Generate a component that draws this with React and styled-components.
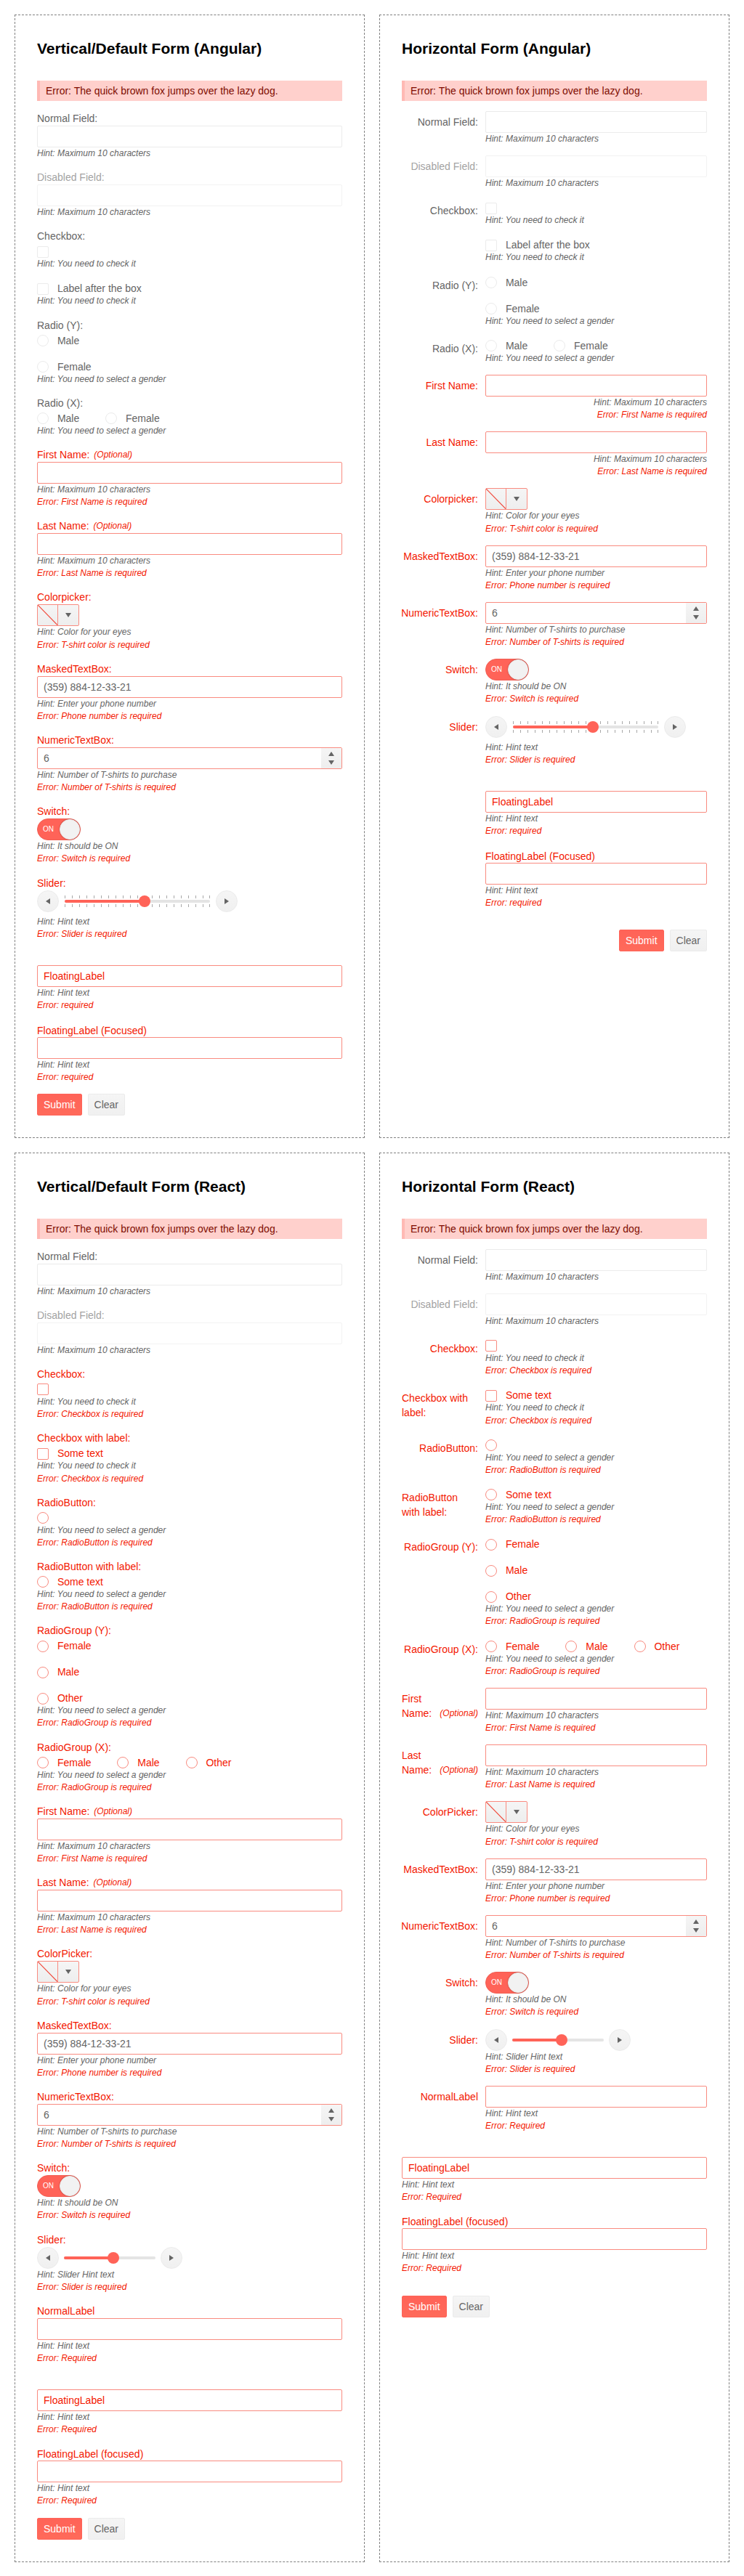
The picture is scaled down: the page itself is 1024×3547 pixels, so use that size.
import React from "react";
import styled, { createGlobalStyle, css } from "styled-components";

const color = {
  text: "#656565",
  error: "#f31700",
  errorBorder: "#f98b80",
  border: "#ebebeb",
  primary: "#ff6358",
};

const GlobalStyle = createGlobalStyle`
  *, *::before, *::after { box-sizing: border-box; }
  body {
    margin: 0;
    background: #fff;
    color: ${color.text};
    font-family: "Liberation Sans", Arial, sans-serif;
    font-size: 14px;
    line-height: 20px;
  }
`;

const Page = styled.main`
  display: grid;
  grid-template-columns: repeat(2, 482px);
  gap: 20px;
  padding: 20px;
`;

const Card = styled.section`
  border: 1px dashed #808080;
  padding: 30px;
`;

const Title = styled.h2`
  margin: 0 0 28.9px;
  color: #000;
  font-size: 21px;
  font-weight: 700;
  line-height: 31.1px;
`;

const Message = styled.div`
  border-left: 4px solid #ffb9b4;
  padding: 4px 8px;
  background: #ffd0cc;
  color: #7e0c00;
`;

const FieldRow = styled.div`
  display: flex;
  flex-direction: ${(p) => (p.$horizontal ? "row" : "column")};
  align-items: ${(p) => (p.$horizontal ? "flex-start" : "stretch")};
  gap: ${(p) => (p.$horizontal ? "10px" : "0")};
  margin-top: 14px;
  color: ${(p) => (p.$error ? color.error : color.text)};
`;

const Label = styled.label`
  display: flex;
  align-items: flex-end;
  opacity: ${(p) => (p.$disabled ? 0.6 : 1)};
  ${(p) =>
    p.$horizontal &&
    css`
      flex: none;
      justify-content: flex-end;
      width: 105px;
      padding-top: 5px;
    `}
`;

const Optional = styled.span`
  margin-left: 6px;
  font-size: 12px;
  font-style: italic;
`;

const Content = styled.div`
  flex: 1;
  min-width: 0;
`;

const TextBox = styled.div`
  display: flex;
  justify-content: space-between;
  height: 30px;
  border: 1px solid ${(p) => (p.$error ? color.errorBorder : color.border)};
  border-radius: 2px;
  background: #fff;
  opacity: ${(p) => (p.$disabled ? 0.6 : 1)};
`;

const Value = styled.span`
  padding: 4px 8px;
  color: ${(p) => (p.$error ? color.error : color.text)};
`;

const FloatingCaption = styled.div`
  height: 20px;
  padding-top: 1px;
`;

const Note = styled.div`
  font-size: 12px;
  font-style: italic;
  line-height: 17.143px;
  text-align: ${(p) => (p.$end ? "right" : "left")};
  color: ${(p) => (p.$error ? color.error : color.text)};
`;

const Options = styled.div`
  display: flex;
  flex-direction: ${(p) => (p.$inline ? "row" : "column")};
  gap: ${(p) => (p.$inline ? "35.89px" : "16px")};
`;

const Option = styled.div`
  display: flex;
  align-items: flex-start;
  gap: 11.89px;
  height: 20px;
`;

const Tick = styled.span`
  width: 16px;
  height: 16px;
  margin-top: 3.25px;
  border: 1px solid ${(p) => (p.$error ? color.errorBorder : color.border)};
  border-radius: ${(p) => (p.$round ? "50%" : "2px")};
  background: #fff;
`;

const OptionText = styled.span`
  padding-top: 1px;
`;

const Picker = styled.div`
  display: flex;
  width: 58px;
  height: 30px;
  border: 1px solid ${color.errorBorder};
  border-radius: 2px;
  background: linear-gradient(#f5f5f5, #eeeeee);
  color: ${color.text};
`;

const Swatch = styled.div`
  width: 28px;
  border-right: 1px solid ${color.errorBorder};
  svg { display: block; }
`;

const PickerButton = styled.div`
  display: flex;
  flex: 1;
  align-items: center;
  justify-content: center;
`;

const Spinner = styled.div`
  display: flex;
  flex-direction: column;
  align-items: center;
  justify-content: center;
  gap: 6px;
  width: 28px;
  background: linear-gradient(#f5f5f5, #eeeeee);
  color: ${color.text};
`;

const SwitchTrack = styled.div`
  display: flex;
  align-items: center;
  justify-content: space-between;
  width: 60px;
  height: 30px;
  border: 1px solid #f15e53;
  border-radius: 15px;
  padding-left: 7px;
  background: ${color.primary};
  color: #fff;
  font-size: 10px;
  line-height: 14px;
`;

const SwitchThumb = styled.span`
  width: 28px;
  height: 28px;
  border: 1px solid #ebebeb;
  border-radius: 50%;
  background: #f2f2f2;
  box-shadow: 0 0 2px rgba(0, 0, 0, 0.3);
`;

const SliderBox = styled.div`
  display: flex;
  align-items: center;
  gap: ${(p) => (p.$ticks ? "8px" : "7px")};
  height: 30px;
  margin-bottom: ${(p) => (p.$ticks ? "5.5px" : "0")};
  color: ${color.text};
`;

const RoundButton = styled.span`
  display: flex;
  align-items: center;
  justify-content: center;
  width: 30px;
  height: 30px;
  border: 1px solid ${color.border};
  border-radius: 50%;
  background: linear-gradient(#f5f5f5, #f0f0f0);
`;

const Actions = styled.div`
  display: flex;
  gap: 8px;
  justify-content: ${(p) => (p.$end ? "flex-end" : "flex-start")};
  margin-top: ${(p) => (p.$horizontal ? "28px" : "14px")};
`;

const Button = styled.button`
  height: 30px;
  margin: 0;
  padding: 4px 8px;
  border: 1px solid ${(p) => (p.$primary ? color.primary : color.border)};
  border-radius: 2px;
  background: ${(p) =>
    p.$primary ? "linear-gradient(#ff6358, #ff6a5a)" : "linear-gradient(#f5f5f5, #f0f0f0)"};
  color: ${(p) => (p.$primary ? "#fff" : color.text)};
  font: inherit;
`;

const ARROWS = {
  up: [8, 6, "0,6 4,0 8,6"],
  down: [8, 6, "0,0 8,0 4,6"],
  left: [6, 8, "6,0 0,4 6,8"],
  right: [6, 8, "0,0 6,4 0,8"],
};

function Arrow({ dir }) {
  const [w, h, points] = ARROWS[dir];
  return (
    <svg width={w} height={h} viewBox={`0 0 ${w} ${h}`} fill="currentColor">
      <polygon points={points} />
    </svg>
  );
}

function Slider({ ticks }) {
  const width = ticks ? 200 : 126;
  const value = ticks ? 110 : 68;
  const marks = ticks ? Array.from({ length: 21 }, (_, i) => Math.min(i * 10, 199)) : [];
  return (
    <SliderBox $ticks={ticks}>
      <RoundButton><Arrow dir="left" /></RoundButton>
      <svg width={width} height="16">
        {marks.map((x) => (
          <g key={x} fill="#a8a8a8">
            <rect x={x} y="0" width="1" height="4" />
            <rect x={x} y="12" width="1" height="4" />
          </g>
        ))}
        <rect y="6" width={width} height="4" rx="2" fill="#e4e4e4" />
        <rect y="6" width={value} height="4" rx="2" fill={color.primary} />
        <circle cx={value} cy="8" r="8" fill={color.primary} />
      </svg>
      <RoundButton><Arrow dir="right" /></RoundButton>
    </SliderBox>
  );
}

function Control({ type, value, options, inline, error, disabled }) {
  switch (type) {
    case "check":
    case "radio":
      return (
        <Options $inline={inline}>
          {(options || [""]).map((text) => (
            <Option key={text}>
              <Tick $round={type === "radio"} $error={error} />
              {text && <OptionText>{text}</OptionText>}
            </Option>
          ))}
        </Options>
      );
    case "color":
      return (
        <Picker>
          <Swatch>
            <svg width="27" height="28">
              <path d="M0 0L27 27.5" stroke="#f1493b" strokeWidth="1.2" />
            </svg>
          </Swatch>
          <PickerButton><Arrow dir="down" /></PickerButton>
        </Picker>
      );
    case "number":
      return (
        <TextBox $error={error}>
          <Value>{value}</Value>
          <Spinner><Arrow dir="up" /><Arrow dir="down" /></Spinner>
        </TextBox>
      );
    case "switch":
      return <SwitchTrack>ON<SwitchThumb /></SwitchTrack>;
    case "slider":
    case "tickSlider":
      return <Slider ticks={type === "tickSlider"} />;
    case "floating":
      return (
        <>
          <FloatingCaption />
          <TextBox $error={error}><Value $error>{value}</Value></TextBox>
        </>
      );
    case "floatingFocused":
      return (
        <>
          <FloatingCaption>{value}</FloatingCaption>
          <TextBox $error={error} />
        </>
      );
    default:
      return (
        <TextBox $error={error} $disabled={disabled}>
          {value && <Value>{value}</Value>}
        </TextBox>
      );
  }
}

function Field({ horizontal, wide, label, optional, hint, error, noteEnd, ...control }) {
  const side = horizontal && !wide;
  return (
    <FieldRow $horizontal={side} $error={!!error}>
      {(label || side) && (
        <Label $horizontal={side} $disabled={control.disabled}>
          {label}
          {optional && <Optional>(Optional)</Optional>}
        </Label>
      )}
      <Content>
        <Control {...control} error={!!error} />
        <Note $end={noteEnd}>Hint: {hint}</Note>
        {error && <Note $error $end={noteEnd}>Error: {error}</Note>}
      </Content>
    </FieldRow>
  );
}

const maxHint = "Maximum 10 characters";
const checkHint = "You need to check it";
const genderHint = "You need to select a gender";

const plainFields = [
  { label: "Normal Field:", hint: maxHint },
  { label: "Disabled Field:", hint: maxHint, disabled: true },
];

const nameFields = (extra) => [
  { label: "First Name:", hint: maxHint, error: "First Name is required", ...extra },
  { label: "Last Name:", hint: maxHint, error: "Last Name is required", ...extra },
];

const widgetFields = (pickerLabel) => [
  { label: pickerLabel, type: "color", hint: "Color for your eyes", error: "T-shirt color is required" },
  { label: "MaskedTextBox:", value: "(359) 884-12-33-21", hint: "Enter your phone number", error: "Phone number is required" },
  { label: "NumericTextBox:", type: "number", value: "6", hint: "Number of T-shirts to purchase", error: "Number of T-shirts is required" },
  { label: "Switch:", type: "switch", hint: "It should be ON", error: "Switch is required" },
];

const angularFields = (nameProps) => [
  ...plainFields,
  { label: "Checkbox:", type: "check", hint: checkHint },
  { type: "check", options: ["Label after the box"], hint: checkHint },
  { label: "Radio (Y):", type: "radio", options: ["Male", "Female"], hint: genderHint },
  { label: "Radio (X):", type: "radio", inline: true, options: ["Male", "Female"], hint: genderHint },
  ...nameFields(nameProps),
  ...widgetFields("Colorpicker:"),
  { label: "Slider:", type: "tickSlider", hint: "Hint text", error: "Slider is required" },
  { type: "floating", value: "FloatingLabel", hint: "Hint text", error: "required" },
  { type: "floatingFocused", value: "FloatingLabel (Focused)", hint: "Hint text", error: "required" },
];

const reactFields = [
  ...plainFields,
  { label: "Checkbox:", type: "check", hint: checkHint, error: "Checkbox is required" },
  { label: "Checkbox with label:", type: "check", options: ["Some text"], hint: checkHint, error: "Checkbox is required" },
  { label: "RadioButton:", type: "radio", hint: genderHint, error: "RadioButton is required" },
  { label: "RadioButton with label:", type: "radio", options: ["Some text"], hint: genderHint, error: "RadioButton is required" },
  { label: "RadioGroup (Y):", type: "radio", options: ["Female", "Male", "Other"], hint: genderHint, error: "RadioGroup is required" },
  { label: "RadioGroup (X):", type: "radio", inline: true, options: ["Female", "Male", "Other"], hint: genderHint, error: "RadioGroup is required" },
  ...nameFields({ optional: true }),
  ...widgetFields("ColorPicker:"),
  { label: "Slider:", type: "slider", hint: "Slider Hint text", error: "Slider is required" },
  { label: "NormalLabel", hint: "Hint text", error: "Required" },
  { type: "floating", wide: true, value: "FloatingLabel", hint: "Hint text", error: "Required" },
  { type: "floatingFocused", wide: true, value: "FloatingLabel (focused)", hint: "Hint text", error: "Required" },
];

function Form({ title, fields, horizontal, actionsEnd }) {
  return (
    <Card>
      <Title>{title}</Title>
      <Message>Error: The quick brown fox jumps over the lazy dog.</Message>
      {fields.map((field, i) => (
        <Field key={i} horizontal={horizontal} {...field} />
      ))}
      <Actions $horizontal={horizontal} $end={actionsEnd}>
        <Button $primary>Submit</Button>
        <Button>Clear</Button>
      </Actions>
    </Card>
  );
}

export default function App() {
  return (
    <>
      <GlobalStyle />
      <Page>
        <Form title="Vertical/Default Form (Angular)" fields={angularFields({ optional: true })} />
        <Form title="Horizontal Form (Angular)" fields={angularFields({ noteEnd: true })} horizontal actionsEnd />
        <Form title="Vertical/Default Form (React)" fields={reactFields} />
        <Form title="Horizontal Form (React)" fields={reactFields} horizontal />
      </Page>
    </>
  );
}
